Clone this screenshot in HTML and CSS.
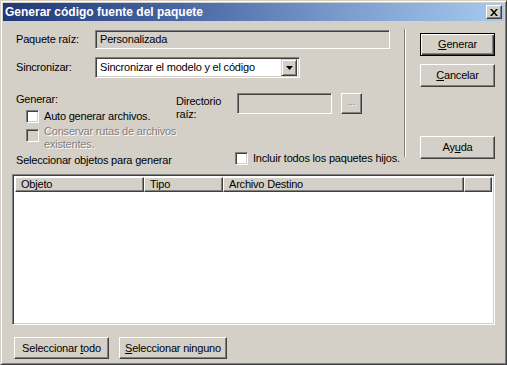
FILE: index.html
```html
<!DOCTYPE html>
<html lang="es">
<head>
<meta charset="utf-8">
<title>Generar código fuente del paquete</title>
<link rel="stylesheet" href="styles.css">
</head>
<body>
<div class="window">
  <div class="titlebar">
    <span class="title">Generar código fuente del paquete</span>
    <button class="close" aria-label="Cerrar"><svg width="8" height="7" viewBox="0 0 8 7"><path d="M0 0h2l2 2.5L6 0h2L5 3.5 8 7H6L4 4.5 2 7H0l3-3.5z" fill="#000"/></svg></button>
  </div>
  <div class="body">
    <div class="top">
      <div class="left">
        <div class="row r1">
          <span class="lbl">Paquete raíz:</span>
          <div class="field ro">Personalizada</div>
        </div>
        <div class="row r2">
          <span class="lbl">Sincronizar:</span>
          <div class="select">
            <span class="sel-text">Sincronizar el modelo y el código</span>
            <span class="drop"><svg width="7" height="4" viewBox="0 0 7 4"><path d="M0 0h7L3.5 4z" fill="#000"/></svg></span>
          </div>
        </div>
        <div class="gen">
          <div class="gen-opts">
            <div class="gen-title">Generar:</div>
            <div class="check c1"><span class="box"></span><span class="ctext">Auto generar archivos.</span></div>
            <div class="check c2 dis"><span class="box"></span><span class="ctext">Conservar rutas de archivos<br>existentes.</span></div>
          </div>
          <div class="dir-label">Directorio<br>raíz:</div>
          <div class="field ro dir"></div>
          <button class="btn dots dis-text">...</button>
        </div>
        <div class="selrow">
          <span class="sel-label">Seleccionar objetos para generar</span>
          <div class="check c3"><span class="box"></span><span class="ctext">Incluir todos los paquetes hijos.</span></div>
        </div>
      </div>
      <div class="sep"></div>
      <div class="right">
        <button class="btn big default"><span><u>G</u>enerar</span></button>
        <button class="btn big cancel"><span><u>C</u>ancelar</span></button>
        <button class="btn big help"><span>Ay<u>u</u>da</span></button>
      </div>
    </div>
    <div class="list">
      <div class="head">
        <span class="col c-obj">Objeto</span>
        <span class="col c-tipo">Tipo</span>
        <span class="col c-arch">Archivo Destino</span>
        <span class="col c-fill"></span>
      </div>
    </div>
    <div class="bottom">
      <button class="btn sel-all"><span>Seleccionar <u>t</u>odo</span></button>
      <button class="btn sel-none"><span><u>S</u>eleccionar ninguno</span></button>
    </div>
  </div>
</div>
</body>
</html>
```

FILE: styles.css
```css
* { box-sizing: border-box; }
html, body { margin: 0; padding: 0; background: #D4D0C8; }
body {
  font-family: "Liberation Sans", Arial, sans-serif;
  font-size: 11px;
  line-height: 13px;
  letter-spacing: -0.2px;
  color: #000;
}
button { font: inherit; color: inherit; padding: 0; margin: 0; letter-spacing: inherit; }
u { text-decoration: underline; text-underline-offset: 1px; }

.window {
  width: 507px;
  height: 365px;
  background: #D4D0C8;
  border-top: 1px solid #D4D0C8;
  border-left: 1px solid #D4D0C8;
  border-right: 1px solid #404040;
  border-bottom: 1px solid #404040;
  box-shadow: inset 1px 1px #fff, inset -1px -1px #808080;
  padding: 2px;
  display: flex;
  flex-direction: column;
}

.titlebar {
  height: 18px;
  background: linear-gradient(to right, #223878 0%, #4766a4 35%, #7e9fcf 70%, #a6caf0 100%);
  display: flex;
  align-items: center;
  padding: 0 2px 0 2px;
  flex: none;
}
.title {
  color: #fff;
  font-weight: bold;
  font-size: 12px;
  flex: 1;
  letter-spacing: 0;
  white-space: nowrap;
}
.close {
  width: 16px;
  height: 14px;
  background: #D4D0C8;
  border-top: 1px solid #fff;
  border-left: 1px solid #fff;
  border-right: 1px solid #404040;
  border-bottom: 1px solid #404040;
  box-shadow: inset -1px -1px #808080;
  display: flex;
  align-items: center;
  justify-content: center;
}

.body {
  flex: 1;
  padding: 8px 0 0 9px;
  display: flex;
  flex-direction: column;
}

.top { display: flex; height: 145px; }
.left { width: 392px; padding-left: 4px; display: flex; flex-direction: column; }
.sep {
  width: 2px;
  height: 128px;
  border-left: 1px solid #808080;
  border-right: 1px solid #fff;
}
.right { padding-left: 14px; display: flex; flex-direction: column; }

.row { display: flex; align-items: center; }
.r1 { margin-top: 1px; height: 19px; }
.r2 { margin-top: 8px; height: 21px; }
.lbl { width: 79px; white-space: nowrap; }

.field {
  border-top: 1px solid #808080;
  border-left: 1px solid #808080;
  border-right: 1px solid #fff;
  border-bottom: 1px solid #fff;
  box-shadow: inset 1px 1px #404040, inset -1px -1px #D4D0C8;
  padding: 0 4px 0 4px;
  display: flex;
  align-items: center;
  white-space: nowrap;
}
.ro { background: #D4D0C8; }
.r1 .field { width: 295px; height: 19px; }

.select {
  width: 205px;
  height: 21px;
  background: #fff;
  border-top: 1px solid #808080;
  border-left: 1px solid #808080;
  border-right: 1px solid #fff;
  border-bottom: 1px solid #fff;
  box-shadow: inset 1px 1px #404040, inset -1px -1px #D4D0C8;
  padding: 2px;
  display: flex;
  align-items: center;
}
.sel-text { flex: 1; padding-left: 2px; white-space: nowrap; overflow: hidden; }
.drop {
  width: 16px;
  height: 17px;
  flex: none;
  background: #D4D0C8;
  border-top: 1px solid #D4D0C8;
  border-left: 1px solid #D4D0C8;
  border-right: 1px solid #404040;
  border-bottom: 1px solid #404040;
  box-shadow: inset 1px 1px #fff, inset -1px -1px #808080;
  display: flex;
  align-items: center;
  justify-content: center;
}

.gen { display: flex; margin-top: 15px; height: 59px; }
.gen-opts { width: 160px; flex: none; }
.gen-title { height: 13px; }
.check { display: flex; align-items: flex-start; }
.box {
  width: 13px;
  height: 13px;
  flex: none;
  background: #fff;
  border-top: 1px solid #808080;
  border-left: 1px solid #808080;
  border-right: 1px solid #fff;
  border-bottom: 1px solid #fff;
  box-shadow: inset 1px 1px #404040, inset -1px -1px #D4D0C8;
}
.ctext { padding-left: 5px; white-space: nowrap; }
.c1 { margin-top: 4px; margin-left: 10px; }
.c2 { margin-top: 6px; margin-left: 10px; }
.c2 .box { background: #D4D0C8; }
.c2 .ctext { margin-top: -4px; }
.dis .ctext, .dis-text { color: #808080; text-shadow: 1px 1px #fff; }
.dir-label { width: 61px; flex: none; padding-top: 2px; white-space: nowrap; }
.field.dir { width: 95px; height: 21px; flex: none; }
.btn {
  background: #D4D0C8;
  border-top: 1px solid #fff;
  border-left: 1px solid #fff;
  border-right: 1px solid #404040;
  border-bottom: 1px solid #404040;
  box-shadow: inset -1px -1px #808080;
  display: flex;
  align-items: center;
  justify-content: center;
  white-space: nowrap;
}
.dots { width: 21px; height: 21px; margin-left: 9px; padding-bottom: 2px; font-size: 9px; flex: none; }

.selrow { display: flex; height: 16px; align-items: flex-start; }
.sel-label { width: 219px; flex: none; padding-top: 2px; white-space: nowrap; }
.c3 { align-items: center; }

.big { width: 75px; height: 23px; }
.default {
  margin-top: 4px;
  border: 1px solid #000;
  box-shadow: inset 1px 1px #fff, inset -1px -1px #404040, inset -2px -2px #808080;
}
.cancel { margin-top: 8px; }
.help { margin-top: 49px; }

.list {
  width: 483px;
  height: 151px;
  background: #fff;
  border-top: 1px solid #808080;
  border-left: 1px solid #808080;
  border-right: 1px solid #fff;
  border-bottom: 1px solid #fff;
  box-shadow: inset 1px 1px #404040, inset -1px -1px #D4D0C8;
  padding: 2px;
}
.head { display: flex; height: 15px; }
.col {
  height: 15px;
  background: #D4D0C8;
  border-top: 1px solid #fff;
  border-left: 1px solid #fff;
  border-right: 1px solid #404040;
  border-bottom: 1px solid #404040;
  box-shadow: inset -1px -1px #808080;
  padding-left: 5px;
  line-height: 12px;
  white-space: nowrap;
}
.c-obj { width: 129px; }
.c-tipo { width: 79px; }
.c-arch { width: 241px; }
.c-fill { flex: 1; }

.bottom { display: flex; margin-top: 12px; margin-left: 2px; gap: 10px; }
.sel-all { width: 95px; height: 22px; }
.sel-none { width: 108px; height: 22px; }
```
